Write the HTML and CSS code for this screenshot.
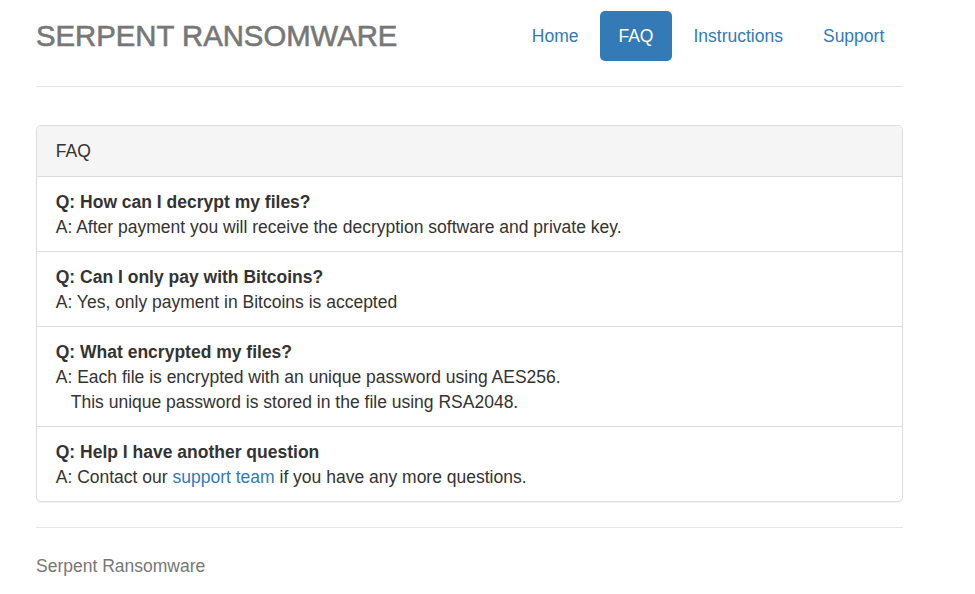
FILE: index.html
```html
<!DOCTYPE html>
<html>
<head>
<meta charset="utf-8">
<title>Serpent Ransomware - FAQ</title>
<link rel="stylesheet" href="styles.css">
</head>
<body>
<div class="container">
  <div class="header">
    <h3 class="brand">SERPENT RANSOMWARE</h3>
    <ul class="nav">
      <li><a href="#">Home</a></li>
      <li class="active"><a href="#">FAQ</a></li>
      <li><a href="#">Instructions</a></li>
      <li><a href="#">Support</a></li>
    </ul>
  </div>

  <div class="panel">
    <div class="panel-heading">FAQ</div>
    <ul class="list-group">
      <li class="list-item">
        <div class="q">Q: How can I decrypt my files?</div>
        <div>A: After payment you will receive the decryption software and private key.</div>
      </li>
      <li class="list-item">
        <div class="q">Q: Can I only pay with Bitcoins?</div>
        <div>A: Yes, only payment in Bitcoins is accepted</div>
      </li>
      <li class="list-item">
        <div class="q">Q: What encrypted my files?</div>
        <div>A: Each file is encrypted with an unique password using AES256.</div>
        <div class="indent">This unique password is stored in the file using RSA2048.</div>
      </li>
      <li class="list-item">
        <div class="q">Q: Help I have another question</div>
        <div>A: Contact our <a href="#">support team</a> if you have any more questions.</div>
      </li>
    </ul>
  </div>

  <footer class="footer">Serpent Ransomware</footer>
</div>
</body>
</html>
```
FILE: styles.css
```css
html, body {
  margin: 0;
  padding: 0;
  background: #fff;
}
body {
  font-family: "Liberation Sans", Arial, Helvetica, sans-serif;
  font-size: 17.5px;
  line-height: 25px;
  color: #333;
}
a {
  color: #337ab7;
  text-decoration: none;
}
.container {
  width: 867px;
  margin: 0 0 0 36px;
}
.header {
  display: flex;
  justify-content: space-between;
  align-items: center;
  padding-top: 11px;
  padding-bottom: 25px;
  border-bottom: 1px solid #e5e5e5;
}
.brand {
  margin: 0;
  font-size: 29.3px;
  line-height: 50px;
  font-weight: 500;
  color: #777;
  -webkit-text-stroke: 0.6px #777;
}
.nav {
  display: flex;
  list-style: none;
  margin: 0;
  padding: 0;
  gap: 2.5px;
}
.nav a {
  display: block;
  padding: 13px 18.75px 12px;
  border-radius: 5px;
  line-height: 25px;
}
.nav .active a {
  background: #337ab7;
  color: #fff;
}
.panel {
  margin-top: 38px;
  margin-bottom: 25px;
  border: 1px solid #ddd;
  border-radius: 5px;
  box-shadow: 0 1px 1px rgba(0,0,0,0.05);
  overflow: hidden;
}
.panel-heading {
  background: #f5f5f5;
  padding: 12.5px 18.75px;
  border-bottom: 1px solid #ddd;
  color: #333;
}
.list-group {
  list-style: none;
  margin: 0;
  padding: 0;
}
.list-item {
  padding: 13px 18.75px 11px;
  border-top: 1px solid #ddd;
}
.list-item:first-child {
  border-top: 0;
}
.q {
  font-weight: bold;
}
.indent {
  padding-left: 15px;
}
.footer {
  border-top: 1px solid #e5e5e5;
  padding-top: 26px;
  color: #777;
}
```
